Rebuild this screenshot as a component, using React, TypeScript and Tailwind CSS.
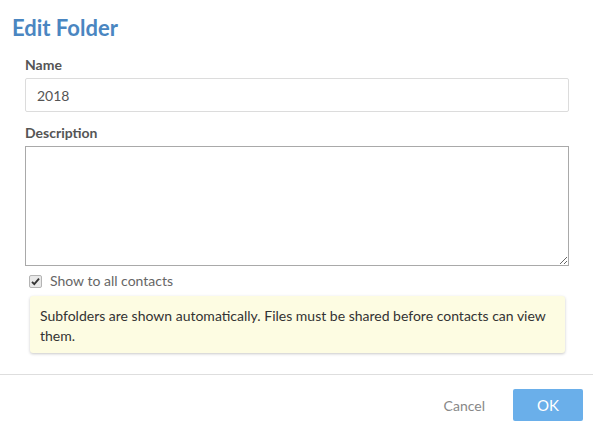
import React from "react";

export default function App() {
  return (
    <div className="w-[593px] h-[435px] bg-white font-['Lato',sans-serif] overflow-hidden">
      <h1 className="pl-3 pt-[13px] text-[22px] font-bold leading-[30px] text-[#4a86c1]">Edit Folder</h1>
      <div className="pl-[25px] pr-[24px]">
        <label className="block mt-3 text-[14px] leading-5 font-bold text-[#555]">Name</label>
        <input
          defaultValue="2018"
          className="mt-[3px] block w-full h-[34px] rounded-[2px] border border-[#dcdcdc] px-[11px] text-[14px] text-[#555] outline-none"
        />
        <label className="block mt-[11px] text-[14px] leading-5 font-bold text-[#555]">Description</label>
        <textarea className="mt-[3px] block w-full h-[120px] border border-[#a9a9a9] px-2 py-1 text-[14px] text-[#555] outline-none" />
        <div className="mt-[5px] flex items-center h-5 pl-1">
          <span className="w-[13px] h-[13px] rounded-[2px] border border-[#b4b4b4] bg-[#e8e8e8] flex items-center justify-center">
            <svg width="9" height="9" viewBox="0 0 9 9">
              <path d="M1 4.8 L3.3 7.2 L8 1.6" stroke="#333" strokeWidth="1.8" fill="none" />
            </svg>
          </span>
          <span className="ml-2 text-[14px] leading-5 text-[#666]">Show to all contacts</span>
        </div>
        <div className="mt-[5px] ml-[5px] mr-[4px] rounded-[3px] bg-[#fdfce2] pl-[10px] pr-3 pt-[10px] pb-[7px] text-[14px] leading-5 text-[#333] shadow-[0_1px_3px_rgba(0,0,0,0.22)]">
          Subfolders are shown automatically. Files must be shared before contacts can view them.
        </div>
      </div>
      <div className="mt-[21px] border-t border-[#dedede] flex justify-end items-center gap-[28px] pt-[14px] pr-[10px]">
        <button className="text-[14px] text-[#888]">Cancel</button>
        <button className="w-[70px] h-[32px] rounded-[2px] bg-[#6aafea] text-white text-[15px]">OK</button>
      </div>
    </div>
  );
}
